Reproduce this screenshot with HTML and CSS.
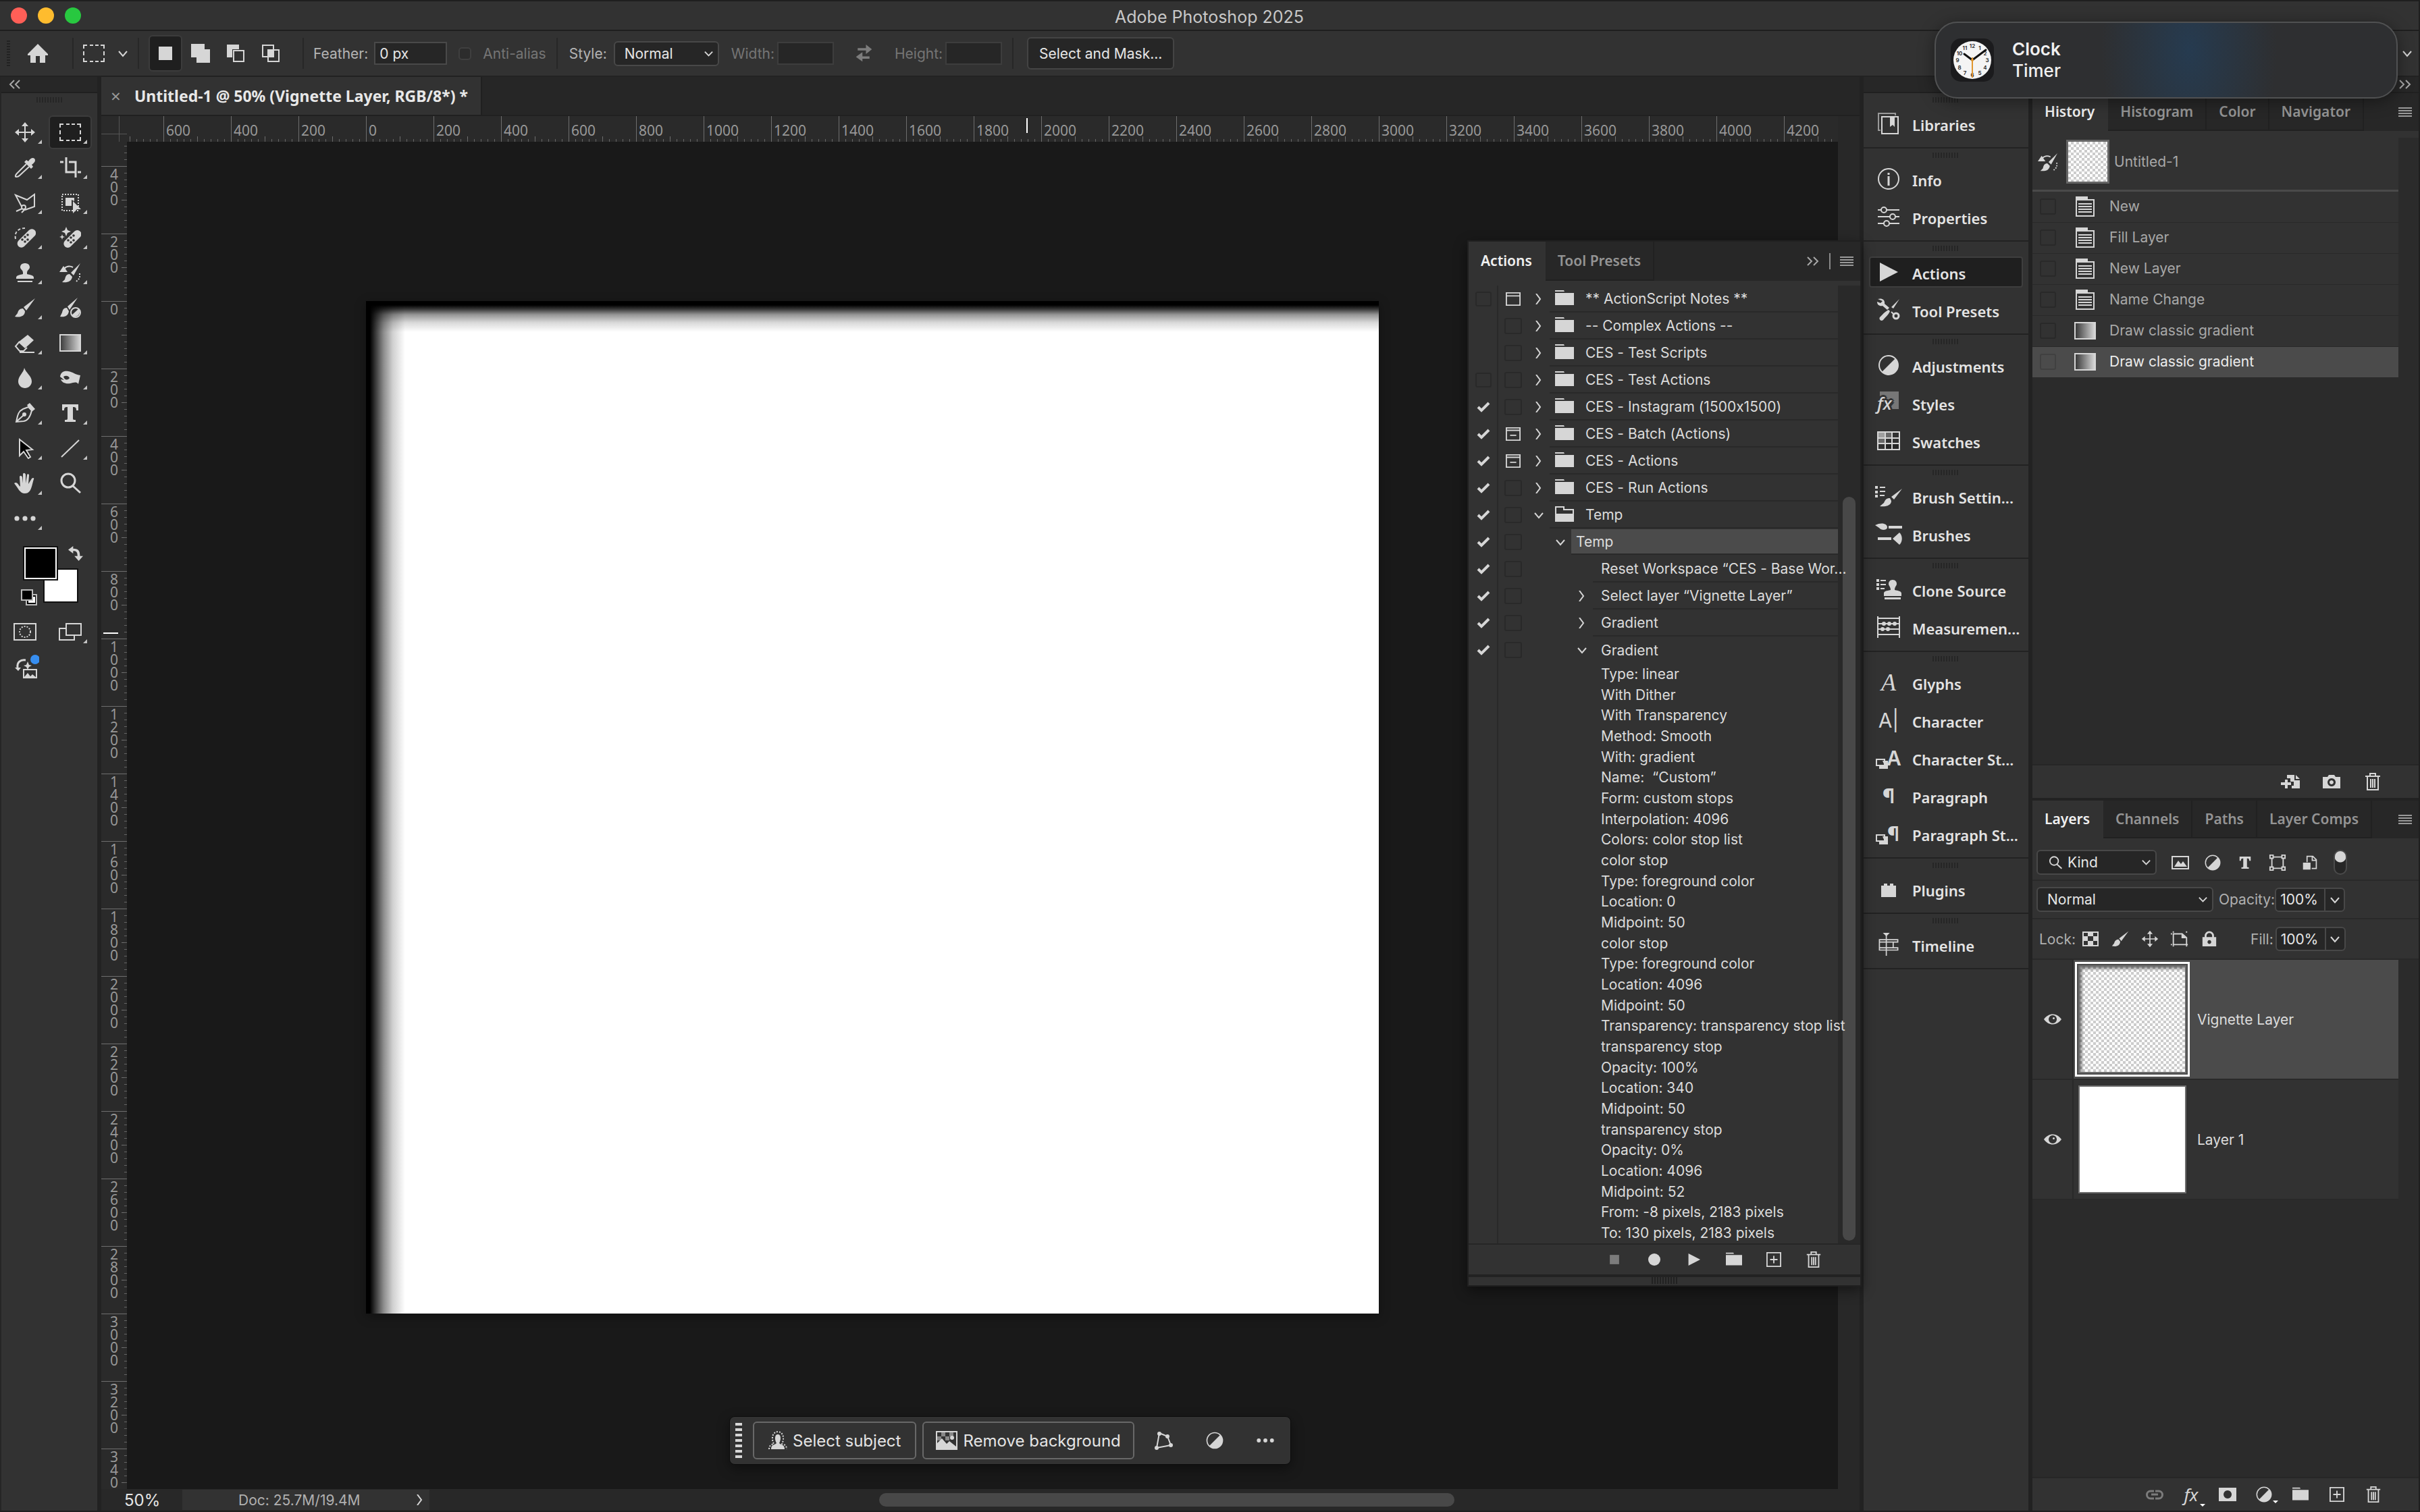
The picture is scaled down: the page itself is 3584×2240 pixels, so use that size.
FILE: index.html
```html
<!DOCTYPE html>
<html lang="en">
<head>
  <meta charset="UTF-8">
  <meta name="viewport" content="width=device-width, initial-scale=1.0">
  <title>Adobe Photoshop 2025</title>
  <link rel="stylesheet" href="styles.css">
</head>
<body>

<!-- Icon sprite -->
<svg class="sprite" aria-hidden="true">
  <defs>
    <linearGradient id="grad"><stop offset="0" stop-color="#3a3a3a"/><stop offset="1" stop-color="#d6d6d6"/></linearGradient>
    <symbol id="i-home" viewBox="0 0 32 32"><path d="M16 2 1 17v2h4v11h8v-10h6v10h8V19h4v-2z"/></symbol>
    <symbol id="i-marquee" viewBox="0 0 32 32"><path class="s" d="M1 9V4h5M10 4h5M18 4h5M26 4h5v5M31 13v6M31 23v5h-5M23 28h-5M15 28h-5M6 28H1v-5M1 19v-6"/></symbol>
    <symbol id="i-chev" viewBox="0 0 16 16"><path class="s" d="M2 5l6 7 6-7"/></symbol>
    <symbol id="i-right" viewBox="0 0 16 16"><path class="s" d="M4 0l6 8-6 8"/></symbol>
    <symbol id="i-dbl" viewBox="0 0 20 16"><path class="s" d="M2 2l6 6-6 6M11 2l6 6-6 6"/></symbol>
    <symbol id="i-dbll" viewBox="0 0 20 16"><path class="s" d="M9 2L3 8l6 6M17 2l-6 6 6 6"/></symbol>
    <symbol id="i-menu" viewBox="0 0 20 16"><path d="M0 1h20v2H0zM0 5h20v2H0zM0 9h20v2H0zM0 13h20v2H0z"/></symbol>
    <symbol id="i-new" viewBox="0 0 32 32"><path d="M6 6h20v20H6z"/></symbol>
    <symbol id="i-add" viewBox="0 0 32 32"><path d="M2 2h20v8h8v20H10v-8H2z"/></symbol>
    <symbol id="i-sub" viewBox="0 0 32 32"><path d="M3 3h18v7H11v12H3z"/><path class="s" d="M13 12h15v16H13z"/></symbol>
    <symbol id="i-int" viewBox="0 0 32 32"><path class="s" d="M4 4h16v17H4zM12 11h16v17H12z"/><path d="M12 11h8v10h-8z"/></symbol>
    <symbol id="i-swap" viewBox="0 0 32 32"><path d="M6 7h14V1l10 8-10 8v-6H6zM26 25H14v5L3 22l11-8v7h12z"/></symbol>
    <symbol id="i-move" viewBox="0 0 32 32"><path class="s" d="M16 5v22M5 16h22"/><path d="M16 1l5 6H11zM16 31l5-6H11zM1 16l6-5v10zM31 16l-6-5v10z"/></symbol>
    <symbol id="i-eyedrop" viewBox="0 0 32 32"><path class="s" d="M18 11L4 25c-2 2-3 5-1 5s3 0 5-2l14-13"/><path d="M15 8l3-3 3 2c3-5 7-6 9-4s1 6-4 9l2 3-3 3z"/></symbol>
    <symbol id="i-crop" viewBox="0 0 32 32"><path class="s3" d="M1 8h5M10 1v22h13M14 8h10v23M27 23h5"/></symbol>
    <symbol id="i-lasso" viewBox="0 0 32 32"><path class="s" d="M11 22L2 5l17 7 11-8v18l-14 5"/><circle class="s" cx="14" cy="23" r="3"/><path class="s" d="M12 25l-9 4M16 26l-5 5"/></symbol>
    <symbol id="i-object" viewBox="0 0 32 32"><path class="d" d="M4 4h24v24H4z"/><path d="M9 9h13v5l-4-2v9H9z"/><path d="M20 14l12 12h-6l-6 6z"/></symbol>
    <symbol id="i-heal" viewBox="0 0 32 32"><path class="s" stroke-dasharray="4 3" d="M2 18C0 8 6 2 16 2"/><rect x="1" y="12" width="34" height="12" rx="6" transform="rotate(-45 17 17)"/><g class="h"><circle cx="16" cy="15" r="1.8"/><circle cx="20" cy="19" r="1.8"/><circle cx="20" cy="12" r="1.8"/><circle cx="12" cy="19" r="1.8"/><circle cx="16" cy="22" r="1.8"/></g></symbol>
    <symbol id="i-remove" viewBox="0 0 32 32"><path d="M10 0l2 5 5 2-5 2-2 5-2-5-5-2 5-2zM4 11l1 3 3 1-3 1-1 3-1-3-3-1 3-1z"/><rect x="3" y="13" width="32" height="12" rx="6" transform="rotate(-45 18 18)"/><g class="h"><circle cx="17" cy="16" r="1.8"/><circle cx="21" cy="20" r="1.8"/><circle cx="21" cy="13" r="1.8"/><circle cx="13" cy="20" r="1.8"/><circle cx="17" cy="23" r="1.8"/></g></symbol>
    <symbol id="i-stamp" viewBox="0 0 32 32"><path d="M16 2c4 0 7 2 7 6 0 3-4 4-4 8v2c4 1 10 2 10 5v2H3v-2c0-3 6-4 10-5v-2c0-4-4-5-4-8 0-4 3-6 7-6zM5 28h22v2H5z"/></symbol>
    <symbol id="i-histbrush" viewBox="0 0 32 32"><path d="M31 2L17 16l4 4zM15 18c-5 0-6 4-7 8l-4 4c8 1 14-1 15-8zM0 15l6-9 6 9z"/><path class="s" d="M7 10c4-4 9-4 13-2"/><path class="d" d="M30 17v7l-6 6"/></symbol>
    <symbol id="i-brush" viewBox="0 0 32 32"><path d="M31 2L14 15l4 5zM13 17c-5 0-7 3-8 7l-4 5c8 2 15-1 15-8z"/></symbol>
    <symbol id="i-mixer" viewBox="0 0 32 32"><path d="M27 1L12 14l3 5zM11 16c-5 0-6 3-7 7l-3 6c7 1 12-1 13-8z"/><circle class="s" cx="24" cy="23" r="7"/><path d="M18 27l11-10c4 8-4 16-11 10z"/></symbol>
    <symbol id="i-eraser" viewBox="0 0 32 32"><path d="M20 4l9 8-13 12-10-9z"/><path class="s" d="M8 14l-6 7 6 7h6l5-5M8 30h22"/></symbol>
    <symbol id="i-gradient" viewBox="0 0 32 32"><path class="s g" d="M1 4h30v24H1z"/></symbol>
    <symbol id="i-blur" viewBox="0 0 32 32"><path d="M15 1c2 7 11 12 11 20 0 6-5 10-10 10S6 27 6 21C6 13 14 8 15 1z"/></symbol>
    <symbol id="i-smudge" viewBox="0 0 32 32"><path fill-rule="evenodd" d="M1 14C2 7 7 5 13 6c7 1 10 5 18 6l-3 13c-3-4-7-2-12-1-7 1-12-1-14-6l5 1zM6 14c2 6 7 5 9 2-2-4-6-4-9-2z"/></symbol>
    <symbol id="i-pen" viewBox="0 0 32 32"><path class="s" d="M3 29c2-8 2-15 10-19l8-3 5 5c-2 9-5 15-12 16zM4 28l10-9"/><circle cx="15" cy="18" r="3"/><path d="M19 4l4-3 8 9-5 4z"/></symbol>
    <symbol id="i-type" viewBox="0 0 32 32"><path d="M4 3h24v9h-3c0-4-1-5-5-5v17c0 2 1 2 4 2v3H8v-3c3 0 4 0 4-2V7C8 7 7 8 7 12H4z"/></symbol>
    <symbol id="i-select" viewBox="0 0 32 32"><path class="k" d="M8 3v24l6-6 7 10 3-2-6-10 9-1z"/></symbol>
    <symbol id="i-line" viewBox="0 0 32 32"><path class="s" d="M3 29L29 4"/></symbol>
    <symbol id="i-hand" viewBox="0 0 32 32"><path d="M0 16c2-2 5-1 7 3l2 2L8 7c0-3 3-3 4 0l1 9V3c0-3 3-3 4 0v13l2-12c0-3 4-2 3 1l-1 12 5-8c2-2 4-1 3 1-3 8-3 21-13 21C8 31 6 23 0 16z"/></symbol>
    <symbol id="i-zoom" viewBox="0 0 32 32"><circle class="s3" cx="13" cy="12" r="10"/><path class="s3" d="M20 20l11 10"/></symbol>
    <symbol id="i-dots" viewBox="0 0 32 32"><circle cx="4" cy="16" r="3.6"/><circle cx="16" cy="16" r="3.6"/><circle cx="28" cy="16" r="3.6"/></symbol>
    <symbol id="i-swapc" viewBox="0 0 24 24"><path d="M0 6l8-6v4c9 0 11 4 11 12h5l-7 8-7-8h5c0-6-2-8-7-8v4z"/></symbol>
    <symbol id="i-mini" viewBox="0 0 24 24"><path fill="#bbb" d="M7 7h17v17H7z"/><path fill="#000" d="M9 9h13v13H9z"/><path fill="#fff" d="M11 11h10v9H11z"/><path fill="#bbb" d="M0 0h18v17H0z"/><path fill="#000" d="M2 2h14v13H2z"/></symbol>
    <symbol id="i-mask" viewBox="0 0 34 26"><path class="s" d="M1 1h32v24H1z"/><circle class="d" cx="17" cy="13" r="8"/></symbol>
    <symbol id="i-screen" viewBox="0 0 34 26"><path class="s" d="M11 1h22v17H11zM10 8H1v17h22v-6"/></symbol>
    <symbol id="i-gen" viewBox="0 0 36 36"><path class="s3" d="M16 8C8 7 3 11 4 19"/><path d="M0 19h9l-4 5zM19 10l2 5 4 1-4 2-2 4-2-4-4-2 4-1z"/><path class="s" d="M13 22h19v12H13z"/><path d="M13 34l6-7 4 5 3-3 6 5z"/><circle cx="30" cy="7" r="7" fill="#378ef0"/></symbol>
    <symbol id="i-lib" viewBox="0 0 34 34"><path fill="none" stroke="#999" stroke-width="2" d="M5 27H2V2h25v3"/><path class="s" d="M7 7h24v25H7z"/><path d="M19 7h7v15l-3-3-4 3z"/></symbol>
    <symbol id="i-info" viewBox="0 0 34 34"><circle class="s" cx="17" cy="17" r="15"/><path d="M15.500 13h3v14h-3zM15.500 8h3v3h-3z"/></symbol>
    <symbol id="i-props" viewBox="0 0 34 34"><path class="s" d="M1 7h5M14 7h19M1 17h18M27 17h6M1 27h9M18 27h15"/><circle class="s" cx="10" cy="7" r="4"/><circle class="s" cx="23" cy="17" r="4"/><circle class="s" cx="14" cy="27" r="4"/></symbol>
    <symbol id="i-play" viewBox="0 0 34 34"><path d="M4 3l27 14L4 31z"/></symbol>
    <symbol id="i-presets" viewBox="0 0 34 34"><path d="M33 1L21 13l3 2zM17 17c-5 2-8 6-13 11-2 3 2 7 5 4 4-5 8-8 10-13zM1 1c6-2 11 1 10 7l7 6-3 3-7-6c-4 1-8-1-8-6l5 2 3-3z"/><path class="s" d="M21 20l4 4"/><circle class="s3" cx="28" cy="26" r="4"/></symbol>
    <symbol id="i-adj" viewBox="0 0 34 34"><circle class="s" cx="17" cy="17" r="14"/><path d="M7 27L27 7a14 14 0 0 1-20 20z"/></symbol>
    <symbol id="i-swatch" viewBox="0 0 34 34"><path fill="#a0a0a0" d="M2 5h10v8H2z"/><path fill="#6a6a6a" d="M2 13h10v8H2zM12 5h10v8H12z"/><path fill="#262626" d="M12 21h20v8H12z"/><path class="s" d="M1 4h32v26H1zM1 13h32M1 21h32M12 4v26M22 4v26"/></symbol>
    <symbol id="i-bset" viewBox="0 0 40 34"><path d="M0 2h4v4H0zM0 9h4v4H0zM0 15h4v4H0zM7 3h8v2H7zM7 9h8v2H7zM7 15h7v2H7zM40 6L24 18l4 4zM22 20c-6 0-7 3-9 7l-6 5c9 1 17-1 17-8z"/></symbol>
    <symbol id="i-brushes" viewBox="0 0 40 34"><path d="M0 4c10-5 18-2 18 3s-9 5-12 1zM20 5h20v4H20zM4 22h20v4H4zM26 24l10-9c5 4 5 14 0 18z"/></symbol>
    <symbol id="i-clone" viewBox="0 0 40 34"><path d="M2 2h4v4H2zM2 8h4v4H2zM2 14h4v4H2zM8 3h8v2H8zM8 9h8v2H8zM8 15h6v2H8zM26 3c4 0 6 3 6 6s-3 4-3 9c5 1 10 2 10 5v4H13v-4c0-3 5-4 10-5 0-5-3-6-3-9s2-6 6-6zM14 29h24v3H14z"/></symbol>
    <symbol id="i-meas" viewBox="0 0 34 34"><path class="s" d="M1 1v32M33 1v32M1 4h32M1 12h32M1 20h32M1 28h32"/><circle cx="10" cy="12" r="3"/><circle cx="18" cy="12" r="3"/><circle cx="26" cy="12" r="3"/><circle cx="8" cy="20" r="3"/><circle cx="16" cy="20" r="3"/></symbol>
    <symbol id="i-plugin" viewBox="0 0 34 34"><path d="M6 12h4V9h5v3h4V9h5v3h4v17H6z"/></symbol>
    <symbol id="i-time" viewBox="0 0 34 40"><path class="s" d="M1 11v20M33 11v6M33 25v6M1 12h32M1 30h32M25 16v10M13 4v36M1 16h32M1 26h32"/><path d="M7 0h12l-6 6z"/></symbol>
    <symbol id="i-doc" viewBox="0 0 28 30"><path d="M0 0h18v4h10v26H0zM2 6v22h24V6z" fill-rule="evenodd"/><path d="M4 10h20v2H4zM4 14h20v2H4zM4 18h20v2H4zM4 22h20v2H4z"/></symbol>
    <symbol id="i-newdoc" viewBox="0 0 28 24"><path d="M9 2h11v8h8v12H16v-4h3v-6h-5V7H9zM22 2l6 6h-6zM6 9h4v4h5v4h-5v5H6v-5H0v-4h6z"/></symbol>
    <symbol id="i-camera" viewBox="0 0 28 24"><path fill-rule="evenodd" d="M1 5h7l2-3h8l2 3h7v17H1zM14 7a6 6 0 1 0 .1 0zm0 3a3 3 0 1 1-.1 0z"/></symbol>
    <symbol id="i-trash" viewBox="0 0 24 28"><path class="s" d="M1 6h22M8 5V2h8v3M4 6v20h16V6M9 10v13M12 10v13M15 10v13"/></symbol>
    <symbol id="i-plus" viewBox="0 0 24 24"><path class="s" d="M1 1h22v22H1zM12 6v12M6 12h12"/></symbol>
    <symbol id="i-folder" viewBox="0 0 28 24"><path d="M0 0h13l1 2H0zM0 4h28v18H0z"/></symbol>
    <symbol id="i-open" viewBox="0 0 28 24"><path class="s" d="M1 1h12v4h14v17H1z"/><path d="M0 11h28v12H0z"/></symbol>
    <symbol id="i-dialog" viewBox="0 0 24 24"><path class="s" d="M1 2h22v20H1zM1 7h22"/></symbol>
    <symbol id="i-dialogm" viewBox="0 0 24 24"><path class="s" d="M1 2h22v20H1zM1 6h22M7 14h10"/></symbol>
    <symbol id="i-image" viewBox="0 0 28 24"><path class="s" d="M2 3h24v18H2z"/><path d="M5 18l6-9 4 5 3-4 6 8z"/></symbol>
    <symbol id="i-shape" viewBox="0 0 28 28"><path class="s" d="M5 5h18v18H5z"/><path class="n" d="M2 2h5v5H2zM21 2h5v5h-5zM2 21h5v5H2zM21 21h5v5h-5z"/></symbol>
    <symbol id="i-smart" viewBox="0 0 28 28"><path class="s" d="M9 13V3h10l6 6v15h-8M18 3v7h7"/><path d="M2 14h13v12H2z"/></symbol>
    <symbol id="i-check" viewBox="0 0 24 24"><path class="s" d="M1 2h22v20H1z"/><path d="M8 2h8v6H8zM1 8h7v7H1zM16 8h7v7h-7zM8 15h8v7H8z"/></symbol>
    <symbol id="i-artb" viewBox="0 0 30 24"><path class="s" d="M5 4h14l7 6v11H5z"/><path d="M18 4l8 7h-8z"/><path class="d" d="M1 4h4M1 21h4M5 0v3M26 0v3M26 21h4M5 22v2M26 22v2"/></symbol>
    <symbol id="i-lock" viewBox="0 0 24 26"><path fill-rule="evenodd" d="M1 10h22v15H1zM12 15a3 3 0 1 0 .1 0z"/><path class="s3" d="M6 11V8a6 6 0 0 1 12 0v3"/></symbol>
    <symbol id="i-eye" viewBox="0 0 26 18"><path fill-rule="evenodd" d="M0 9C7-1 19-1 26 9 19 19 7 19 0 9zm13-6a6 6 0 1 0 .1 0z"/><circle cx="14.500" cy="7.500" r="1.500"/></symbol>
    <symbol id="i-link" viewBox="0 0 28 20"><path class="s3" d="M13 5H8a5 5 0 0 0 0 11h5M15 5h5a5 5 0 0 1 0 11h-5M9 10h10"/></symbol>
    <symbol id="i-amask" viewBox="0 0 26 22"><path fill-rule="evenodd" d="M0 1h26v20H0zM13 5a6 6 0 1 0 .1 0z"/></symbol>
    <symbol id="i-cst" viewBox="0 0 34 34"><path class="s" d="M1 15h12v9H1z"/><path d="M10 17h8v12H5v-5h8z"/></symbol>
    <symbol id="i-subject" viewBox="0 0 28 28"><path class="d" d="M1 27c0-6 4-7 7-8-3-5-4-17 6-18 10 1 9 13 6 18 3 1 7 2 7 8"/><path d="M14 5c5 0 5 8 2 13 3 3 8 2 8 9H4c0-7 5-6 8-9C9 13 9 5 14 5z"/></symbol>
    <symbol id="i-bg" viewBox="0 0 32 28"><path class="s" d="M1 1h30v26H1z"/><path fill="#888" d="M8 2h6v6H8zM20 2h6v6h-6zM2 8h6v6H2zM14 8h6v6h-6z"/><path d="M2 26V18l7-7 7 8 4-4 10 8v4z"/><circle cx="24" cy="10" r="3"/></symbol>
    <symbol id="i-poly" viewBox="0 0 28 28"><path class="s" d="M8 3l12 5 5 13L4 25z"/><circle cx="8" cy="4" r="3"/><circle cx="20" cy="8" r="3"/><circle cx="25" cy="21" r="3"/><circle cx="4" cy="25" r="3"/></symbol>
  </defs>
</svg>

<header class="titlebar">
  <span class="light red"></span><span class="light yellow"></span><span class="light green"></span>
  <h1>Adobe Photoshop 2025</h1>
</header>

<div class="options">
  <span class="vgrip"></span>
  <button class="home" aria-label="Home"><svg class="i32"><use href="#i-home"/></svg></button>
  <span class="sep"></span>
  <button class="preset" aria-label="Tool preset"><svg class="i32"><use href="#i-marquee"/></svg><svg class="i16"><use href="#i-chev"/></svg></button>
  <span class="sep"></span>
  <div class="modes">
    <button class="mode active" aria-label="New selection"><svg class="i32"><use href="#i-new"/></svg></button>
    <button class="mode" aria-label="Add to selection"><svg class="i32"><use href="#i-add"/></svg></button>
    <button class="mode" aria-label="Subtract from selection"><svg class="i32"><use href="#i-sub"/></svg></button>
    <button class="mode" aria-label="Intersect with selection"><svg class="i32"><use href="#i-int"/></svg></button>
  </div>
  <span class="sep"></span>
  <div class="field feather"><label for="feather">Feather:</label><input type="text" id="feather" value="0 px"></div>
  <div class="field anti off"><input type="checkbox" id="anti" disabled><label for="anti">Anti-alias</label></div>
  <span class="sep"></span>
  <div class="field style"><label for="style">Style:</label><select id="style"><option>Normal</option></select></div>
  <div class="field off"><label for="w">Width:</label><input type="text" id="w" class="small" disabled></div>
  <button class="swap off" aria-label="Swap width and height"><svg class="i28"><use href="#i-swap"/></svg></button>
  <div class="field off"><label for="h">Height:</label><input type="text" id="h" class="small" disabled></div>
  <span class="sep"></span>
  <button class="mask-btn">Select and Mask...</button>
  <button class="more" aria-label="Workspace"><svg class="i16"><use href="#i-chev"/></svg></button>
</div>

<main class="workspace">
  <aside class="tools">
    <div class="head"><svg class="dbl"><use href="#i-dbll"/></svg></div>
    <div class="grip"></div>
    <div class="tool-grid">
      <button class="tool" aria-label="Move"><svg class="i32"><use href="#i-move"/></svg></button>
      <button class="tool active" aria-label="Rectangular Marquee"><svg class="i32"><use href="#i-marquee"/></svg></button>
      <button class="tool" aria-label="Eyedropper"><svg class="i32"><use href="#i-eyedrop"/></svg></button>
      <button class="tool" aria-label="Crop"><svg class="i32"><use href="#i-crop"/></svg></button>
      <button class="tool" aria-label="Polygonal Lasso"><svg class="i32"><use href="#i-lasso"/></svg></button>
      <button class="tool" aria-label="Object Selection"><svg class="i32"><use href="#i-object"/></svg></button>
      <button class="tool" aria-label="Spot Healing Brush"><svg class="i32"><use href="#i-heal"/></svg></button>
      <button class="tool" aria-label="Remove"><svg class="i32"><use href="#i-remove"/></svg></button>
      <button class="tool" aria-label="Clone Stamp"><svg class="i32"><use href="#i-stamp"/></svg></button>
      <button class="tool" aria-label="History Brush"><svg class="i32"><use href="#i-histbrush"/></svg></button>
      <button class="tool" aria-label="Brush"><svg class="i32"><use href="#i-brush"/></svg></button>
      <button class="tool single" aria-label="Mixer Brush"><svg class="i32"><use href="#i-mixer"/></svg></button>
      <button class="tool" aria-label="Eraser"><svg class="i32"><use href="#i-eraser"/></svg></button>
      <button class="tool" aria-label="Gradient"><svg class="i32"><use href="#i-gradient"/></svg></button>
      <button class="tool" aria-label="Blur"><svg class="i32"><use href="#i-blur"/></svg></button>
      <button class="tool" aria-label="Burn"><svg class="i32"><use href="#i-smudge"/></svg></button>
      <button class="tool" aria-label="Pen"><svg class="i32"><use href="#i-pen"/></svg></button>
      <button class="tool" aria-label="Type"><svg class="i32"><use href="#i-type"/></svg></button>
      <button class="tool" aria-label="Path Selection"><svg class="i32"><use href="#i-select"/></svg></button>
      <button class="tool" aria-label="Line"><svg class="i32"><use href="#i-line"/></svg></button>
      <button class="tool" aria-label="Hand"><svg class="i32"><use href="#i-hand"/></svg></button>
      <button class="tool single" aria-label="Zoom"><svg class="i32"><use href="#i-zoom"/></svg></button>
      <button class="tool" aria-label="Edit Toolbar"><svg class="i32"><use href="#i-dots"/></svg></button>
    </div>
    <div class="colors">
      <button class="swatch back" aria-label="Background color"></button>
      <button class="swatch fore" aria-label="Foreground color"></button>
      <svg class="swap-colors"><use href="#i-swapc"/></svg>
      <svg class="mini"><use href="#i-mini"/></svg>
    </div>
    <div class="tool-grid">
      <button class="tool single" aria-label="Quick Mask"><svg class="wide"><use href="#i-mask"/></svg></button>
      <button class="tool" aria-label="Screen Mode"><svg class="wide"><use href="#i-screen"/></svg></button>
      <button class="tool single gen" aria-label="Generate"><svg class="i36"><use href="#i-gen"/></svg></button>
    </div>
  </aside>

  <section class="document">
    <div class="doc-tabs">
      <div class="doc-tab"><button class="close" aria-label="Close">×</button>Untitled-1 @ 50% (Vignette Layer, RGB/8*) *</div>
    </div>
    <div class="doc-body">
      <div class="corner"></div>
      <div class="ruler-h" id="rulerH"><i class="pos"></i></div>
      <div class="filler"></div>
      <div class="ruler-v" id="rulerV"><i class="pos"></i></div>
      <div class="canvas">
        <div class="artboard"></div>
        <div class="taskbar">
          <span class="dots"></span>
          <button class="task"><svg class="i28"><use href="#i-subject"/></svg>Select subject</button>
          <button class="task"><svg class="i32"><use href="#i-bg"/></svg>Remove background</button>
          <button class="plain" aria-label="Transform"><svg class="i28"><use href="#i-poly"/></svg></button>
          <button class="plain" aria-label="Adjustment"><svg class="i28"><use href="#i-adj"/></svg></button>
          <button class="plain" aria-label="More"><svg class="i26"><use href="#i-dots"/></svg></button>
        </div>
      </div>
      <div class="vscroll"></div>
    </div>
    <div class="status">
      <span class="zoom">50%</span>
      <div class="doc-size"><span>Doc: 25.7M/19.4M</span><svg class="i16"><use href="#i-right"/></svg></div>
      <div class="hscroll"><div class="thumb"></div></div>
    </div>
  </section>

  <aside class="dock">
    <div class="head"></div>
    <div class="group"><button><svg class="i34"><use href="#i-lib"/></svg>Libraries</button></div>
    <div class="group">
      <button><svg class="i34"><use href="#i-info"/></svg>Info</button>
      <button><svg class="i34"><use href="#i-props"/></svg>Properties</button>
    </div>
    <div class="group">
      <button class="active"><svg class="i34"><use href="#i-play"/></svg>Actions</button>
      <button><svg class="i34"><use href="#i-presets"/></svg>Tool Presets</button>
    </div>
    <div class="group">
      <button><svg class="i34"><use href="#i-adj"/></svg>Adjustments</button>
      <button><span class="glyph fx">fx</span>Styles</button>
      <button><svg class="i34"><use href="#i-swatch"/></svg>Swatches</button>
    </div>
    <div class="group">
      <button><svg class="i40"><use href="#i-bset"/></svg>Brush Settin...</button>
      <button><svg class="i40"><use href="#i-brushes"/></svg>Brushes</button>
    </div>
    <div class="group">
      <button><svg class="i40"><use href="#i-clone"/></svg>Clone Source</button>
      <button><svg class="i34"><use href="#i-meas"/></svg>Measuremen...</button>
    </div>
    <div class="group">
      <button><span class="glyph script">A</span>Glyphs</button>
      <button><span class="glyph">A|</span>Character</button>
      <button><span class="glyph mixed"><svg><use href="#i-cst"/></svg>A</span>Character St...</button>
      <button><span class="glyph para">¶</span>Paragraph</button>
      <button><span class="glyph mixed"><svg><use href="#i-cst"/></svg>¶</span>Paragraph St...</button>
    </div>
    <div class="group"><button><svg class="i34"><use href="#i-plugin"/></svg>Plugins</button></div>
    <div class="group"><button><svg class="i40"><use href="#i-time"/></svg>Timeline</button></div>
  </aside>

  <aside class="panels">
    <div class="head end"><svg class="dbl"><use href="#i-dbl"/></svg></div>
    <section class="panel history">
      <div class="tabs">
        <button class="tab active">History</button><button class="tab">Histogram</button><button class="tab">Color</button><button class="tab">Navigator</button>
        <svg class="menu"><use href="#i-menu"/></svg>
      </div>
      <div class="scroll-area">
        <div class="list">
          <div class="snapshot"><svg class="i30"><use href="#i-histbrush"/></svg><span class="thumb checker"></span>Untitled-1</div>
          <ul class="states">
            <li><input type="checkbox" aria-label="New"><svg class="doc"><use href="#i-doc"/></svg>New</li>
            <li><input type="checkbox" aria-label="Fill Layer"><svg class="doc"><use href="#i-doc"/></svg>Fill Layer</li>
            <li><input type="checkbox" aria-label="New Layer"><svg class="doc"><use href="#i-doc"/></svg>New Layer</li>
            <li><input type="checkbox" aria-label="Name Change"><svg class="doc"><use href="#i-doc"/></svg>Name Change</li>
            <li><input type="checkbox" aria-label="Draw classic gradient"><span class="gradient"></span>Draw classic gradient</li>
            <li class="active"><input type="checkbox" aria-label="Draw classic gradient"><span class="gradient"></span>Draw classic gradient</li>
          </ul>
        </div>
      </div>
      <div class="foot hist-foot">
        <button aria-label="New document from state"><svg class="i28"><use href="#i-newdoc"/></svg></button>
        <button aria-label="New snapshot"><svg class="i28"><use href="#i-camera"/></svg></button>
        <button aria-label="Delete"><svg class="i28"><use href="#i-trash"/></svg></button>
      </div>
    </section>

    <section class="panel layers">
      <div class="tabs">
        <button class="tab active">Layers</button><button class="tab">Channels</button><button class="tab">Paths</button><button class="tab">Layer Comps</button>
        <svg class="menu"><use href="#i-menu"/></svg>
      </div>
      <div class="filter-row">
        <div class="kind"><svg class="i20"><use href="#i-zoom"/></svg><select aria-label="Filter"><option>Kind</option></select></div>
        <button aria-label="Pixel layers"><svg class="i28"><use href="#i-image"/></svg></button>
        <button aria-label="Adjustment layers"><svg class="i26"><use href="#i-adj"/></svg></button>
        <button aria-label="Type layers"><svg class="i22"><use href="#i-type"/></svg></button>
        <button aria-label="Shape layers"><svg class="i26"><use href="#i-shape"/></svg></button>
        <button aria-label="Smart objects"><svg class="i24"><use href="#i-smart"/></svg></button>
        <input type="checkbox" class="toggle" aria-label="Filtering on or off">
      </div>
      <div class="blend-row">
        <select class="blend" aria-label="Blend mode"><option>Normal</option></select>
        <label for="opacity">Opacity:</label>
        <div class="combo"><input type="text" id="opacity" value="100%"><button aria-label="Opacity slider"><svg class="i16"><use href="#i-chev"/></svg></button></div>
      </div>
      <div class="lock-row">
        <span>Lock:</span>
        <button aria-label="Lock transparency"><svg class="i24"><use href="#i-check"/></svg></button>
        <button aria-label="Lock pixels"><svg class="i26"><use href="#i-brush"/></svg></button>
        <button aria-label="Lock position"><svg class="i26"><use href="#i-move"/></svg></button>
        <button aria-label="Lock artboard"><svg class="i28"><use href="#i-artb"/></svg></button>
        <button aria-label="Lock all"><svg class="i24"><use href="#i-lock"/></svg></button>
        <label for="fill">Fill:</label>
        <div class="combo"><input type="text" id="fill" value="100%"><button aria-label="Fill slider"><svg class="i16"><use href="#i-chev"/></svg></button></div>
      </div>
      <div class="scroll-area">
        <div class="list">
          <div class="layer active"><button class="eye" aria-label="Visibility"><svg class="i26"><use href="#i-eye"/></svg></button><div class="name"><span class="frame"><span class="thumb checker shade"></span></span>Vignette Layer</div></div>
          <div class="layer"><button class="eye" aria-label="Visibility"><svg class="i26"><use href="#i-eye"/></svg></button><div class="name"><span class="frame"><span class="thumb"></span></span>Layer 1</div></div>
        </div>
      </div>
      <div class="foot">
        <button class="off" aria-label="Link layers"><svg class="i28"><use href="#i-link"/></svg></button>
        <button class="fx drop" aria-label="Layer style">fx</button>
        <button aria-label="Add mask"><svg class="i26"><use href="#i-amask"/></svg></button>
        <button class="drop" aria-label="New adjustment layer"><svg class="i26"><use href="#i-adj"/></svg></button>
        <button aria-label="New group"><svg class="i24"><use href="#i-folder"/></svg></button>
        <button aria-label="New layer"><svg class="i22"><use href="#i-plus"/></svg></button>
        <button aria-label="Delete layer"><svg class="i26"><use href="#i-trash"/></svg></button>
      </div>
    </section>
  </aside>

  <!-- Floating actions panel -->
  <section class="actions">
    <div class="tabs">
      <button class="tab active">Actions</button><button class="tab">Tool Presets</button>
      <svg class="dbl"><use href="#i-dbl"/></svg><span class="bar"></span><svg class="menu"><use href="#i-menu"/></svg>
    </div>
    <div class="act-body">
      <div class="act-list">
        <div id="rows"></div>
        <ul class="props" id="props"></ul>
      </div>
      <div class="act-scroll"><div class="thumb"></div></div>
    </div>
    <div class="foot act-foot">
      <button class="off" aria-label="Stop"><svg class="i22"><use href="#i-new"/></svg></button>
      <button aria-label="Record"><span class="rec"></span></button>
      <button aria-label="Play"><svg class="i22"><use href="#i-play"/></svg></button>
      <button aria-label="New set"><svg class="i24"><use href="#i-folder"/></svg></button>
      <button aria-label="New action"><svg class="i22"><use href="#i-plus"/></svg></button>
      <button aria-label="Delete"><svg class="i26"><use href="#i-trash"/></svg></button>
    </div>
    <div class="resize"></div>
  </section>
</main>

<div class="notice" role="status">
  <svg class="clock" viewBox="0 0 64 64">
    <rect width="64" height="64" rx="15" fill="#1b1b1d"/>
    <circle cx="32" cy="32" r="28" fill="#f4f4f4"/>
    <g class="nums">
      <text x="32" y="14">12</text><text x="43" y="17">1</text><text x="51" y="25">2</text><text x="54" y="35">3</text><text x="51" y="46">4</text><text x="43" y="54">5</text><text x="32" y="57">6</text><text x="21" y="54">7</text><text x="13" y="46">8</text><text x="10" y="35">9</text><text x="13" y="25">10</text><text x="21" y="17">11</text>
    </g>
    <path d="M32 32L20 23M32 32L52 17" stroke="#111" stroke-width="3" stroke-linecap="round"/>
    <path d="M32 28v30" stroke="#e0962f" stroke-width="2"/><circle cx="32" cy="32" r="2" fill="#e0962f"/>
  </svg>
  <div><strong>Clock</strong><p>Timer</p></div>
</div>

<script>
  const use = (id, cls) => `<svg class="${cls}"><use href="#i-${id}"/></svg>`;

  // Rulers: one cell per 200 units, the first one starts outside and has no label
  const rulerH = document.getElementById('rulerH');
  for (let n = -800; n <= 4200; n += 200) {
    rulerH.insertAdjacentHTML('beforeend', `<span class="cell">${n === -800 ? '' : Math.abs(n)}</span>`);
  }
  const rulerV = document.getElementById('rulerV');
  for (let n = -600; n <= 3400; n += 200) {
    const digits = n === -600 ? '' : String(Math.abs(n)).split('').join('<br>');
    rulerV.insertAdjacentHTML('beforeend', `<span class="cell">${digits}</span>`);
  }

  // toggle: on / empty / none, dialog: icon or box
  const rows = [
    { toggle: 'empty', dialog: 'dialog', type: 'set', name: '** ActionScript Notes **' },
    { toggle: 'none', type: 'set', name: '-- Complex Actions --' },
    { toggle: 'none', type: 'set', name: 'CES - Test Scripts' },
    { toggle: 'empty', type: 'set', name: 'CES - Test Actions' },
    { toggle: 'on', type: 'set', name: 'CES - Instagram (1500x1500)' },
    { toggle: 'on', dialog: 'dialogm', type: 'set', name: 'CES - Batch (Actions)' },
    { toggle: 'on', dialog: 'dialogm', type: 'set', name: 'CES - Actions' },
    { toggle: 'on', type: 'set', name: 'CES - Run Actions' },
    { toggle: 'on', type: 'set', open: true, name: 'Temp' },
    { toggle: 'on', type: 'action', open: true, name: 'Temp' },
    { toggle: 'on', type: 'step', leaf: true, name: 'Reset Workspace “CES - Base Wor...' },
    { toggle: 'on', type: 'step', name: 'Select layer “Vignette Layer”' },
    { toggle: 'on', type: 'step', name: 'Gradient' },
    { toggle: 'on', type: 'step', open: true, name: 'Gradient' }
  ];
  document.getElementById('rows').innerHTML = rows.map(r => `
    <div class="row ${r.type}">
      <span class="tg">${r.toggle === 'none' ? '' : `<input type="checkbox" aria-label="Toggle ${r.name}" ${r.toggle === 'on' ? 'checked' : ''}>`}</span>
      <span class="dg">${r.dialog ? use(r.dialog, 'i22') : '<i class="box"></i>'}</span>
      <span class="chev">${r.leaf ? '' : use(r.open ? 'chev' : 'right', 'i16')}</span>
      <span class="label">${r.type === 'set' ? use(r.open ? 'open' : 'folder', 'i28') : ''}<span>${r.name}</span></span>
    </div>`).join('');

  const props = ['Type: linear', 'With Dither', 'With Transparency', 'Method: Smooth', 'With: gradient',
    'Name:  “Custom”', 'Form: custom stops', 'Interpolation: 4096', 'Colors: color stop list', 'color stop',
    'Type: foreground color', 'Location: 0', 'Midpoint: 50', 'color stop', 'Type: foreground color',
    'Location: 4096', 'Midpoint: 50', 'Transparency: transparency stop list', 'transparency stop',
    'Opacity: 100%', 'Location: 340', 'Midpoint: 50', 'transparency stop', 'Opacity: 0%',
    'Location: 4096', 'Midpoint: 52', 'From: -8 pixels, 2183 pixels', 'To: 130 pixels, 2183 pixels'];
  document.getElementById('props').innerHTML = props.map(p => `<li>${p}</li>`).join('');
</script>
</body>
</html>
```
FILE: styles.css
```css
* {
  margin: 0;
  padding: 0;
  box-sizing: border-box;
}

body {
  height: 100vh;
  display: flex;
  flex-direction: column;
  overflow: hidden;
  background: #323232;
  color: #dcdcdc;
  font-family: Inter, "Liberation Sans", sans-serif;
  font-size: 21px;
  font-feature-settings: "calt" 0;
  position: relative;
  border-right: 2px solid #1f1f1f;
  border-bottom: 2px solid #1f1f1f;
}

button, input, select {
  font: inherit;
  color: inherit;
  background: none;
  border: none;
}

button {
  display: flex;
  align-items: center;
  justify-content: center;
}

ul { list-style: none; }

/* Icons */
.sprite { position: absolute; width: 0; height: 0; }
svg { fill: currentColor; flex: none; color: #d6d6d6; }
.s, .s3, .d { fill: none; stroke: currentColor; stroke-width: 2; }
.s3 { stroke-width: 3; }
.d { stroke-dasharray: 2 2; }
.h { fill: #323232; }
.k { fill: #000; stroke: #d6d6d6; stroke-width: 2; }
.n { fill: #323232; stroke: currentColor; stroke-width: 2; }
.g { fill: url(#grad); }
.i16 { width: 16px; height: 16px; }
.i20 { width: 20px; height: 20px; }
.i22 { width: 22px; height: 22px; }
.i24 { width: 24px; height: 24px; }
.i26 { width: 26px; height: 26px; }
.i28 { width: 28px; height: 28px; }
.i30 { width: 30px; height: 30px; }
.i32 { width: 32px; height: 32px; }
.i34 { width: 34px; height: 34px; }
.i36 { width: 36px; height: 36px; }
.i40 { width: 40px; height: 34px; }
.wide { width: 34px; height: 26px; }
.dbl { width: 20px; height: 16px; color: #a8a8a8; }
.menu { width: 20px; height: 16px; color: #9a9a9a; }
.off, .off svg { color: #7c7c7c; }

/* Title bar */
.titlebar {
  height: 46px;
  flex: none;
  display: flex;
  align-items: center;
  gap: 16px;
  padding-left: 16px;
  border-top: 2px solid #1f1f1f;
  border-bottom: 2px solid #1f1f1f;
}
.light { width: 24px; height: 24px; border-radius: 50%; }
.red { background: #ff5f57; }
.yellow { background: #febc2e; }
.green { background: #28c840; }
.titlebar h1 {
  flex: 1;
  margin-right: 136px;
  padding-top: 3px;
  text-align: center;
  font-size: 25px;
  font-weight: 400;
  color: #c8c8c8;
}

/* Options bar */
.options {
  height: 68px;
  flex: none;
  display: flex;
  align-items: center;
  border-bottom: 2px solid #222;
  padding-left: 10px;
}
.vgrip {
  width: 5px;
  height: 38px;
  background: repeating-linear-gradient(#222 0 2px, transparent 2px 4px);
}
.home { margin: 0 35px 0 25px; }
.sep { width: 2px; height: 46px; background: #272727; }
.preset { margin: 0 14px 0 14px; gap: 19px; }
.modes { display: flex; margin: 0 22px 0 14px; gap: 2px; }
.mode { width: 50px; height: 54px; border: 2px solid transparent; border-radius: 6px; }
.mode.active { background: #1f1f1f; border-color: #3c3c3c; }
.field { display: flex; align-items: center; gap: 4px; margin-right: 18px; color: #b4b4b4; }
.field input[type="text"] {
  width: 108px;
  height: 34px;
  padding-left: 6px;
  color: #e6e6e6;
  background: #262626;
  border: 2px solid #494949;
}
.field input.small { width: 84px; border-color: #3d3d3d; }
.feather { margin-left: 14px; margin-right: 17px; gap: 9px; }
.anti { gap: 17px; }
.anti input { appearance: none; width: 19px; height: 19px; border: 2px solid #3f3f3f; border-radius: 5px; background: #2c2c2c; }
.field.off { color: #757575; }
.style { margin-left: 17px; gap: 10px; }
select {
  appearance: none;
  height: 37px;
  padding: 0 14px;
  color: #e6e6e6;
  border: 2px solid #484848;
  border-radius: 6px;
  background: #262626 url("data:image/svg+xml,%3Csvg xmlns='http://www.w3.org/2000/svg' viewBox='0 0 16 16'%3E%3Cpath d='M2 5l6 6 6-6' fill='none' stroke='%23d6d6d6' stroke-width='2'/%3E%3C/svg%3E") no-repeat right 6px center / 15px;
}
.style select { width: 156px; }
.swap { margin: 0 32px 0 12px; }
.options .field + .sep { margin-left: -3px; }
.mask-btn {
  margin-left: 20px;
  width: 218px;
  height: 48px;
  color: #e6e6e6;
  background: #262626;
  border: 2px solid #444;
  border-radius: 6px;
}
.more { margin-left: auto; margin-right: 9px; }

/* Workspace */
.workspace { flex: 1; min-height: 0; display: flex; position: relative; background: #222; gap: 6px; }
.head { height: 24px; flex: none; background: #272727; border-bottom: 2px solid #202020; display: flex; align-items: center; padding: 0 10px; }
.head.end { justify-content: flex-end; }
.grip { width: 38px; height: 8px; margin: 6px auto 19px; background: repeating-linear-gradient(90deg, #262626 0 2px, transparent 2px 4px); }

/* Tools */
.tools { width: 144px; flex: none; background: #323232; border-left: 2px solid #262626; }
.tool-grid { display: grid; grid-template-columns: 64px 64px; gap: 2px 3px; padding-left: 3px; }
.tool { height: 50px; border: 2px solid transparent; border-radius: 6px; position: relative; }
.tool.active { background: #1f1f1f; border-color: #3c3c3c; }
.tool::after {
  content: "";
  position: absolute;
  right: 5px;
  bottom: 6px;
  border: 3px solid transparent;
  border-right-color: #c4c4c4;
  border-bottom-color: #c4c4c4;
}
.tool.single::after { display: none; }
.tool.gen svg { margin-left: 6px; }
.colors { height: 106px; margin: 12px 0 0 29px; position: relative; }
.swatch { position: absolute; width: 52px; height: 51px; border: 2px solid #111; }
.fore { left: 3px; top: 4px; background: #000; outline: 2px solid #fff; outline-offset: -4px; }
.back { left: 33px; top: 37px; background: #fff; }
.swap-colors { position: absolute; left: 70px; top: 4px; width: 22px; height: 22px; }
.mini { position: absolute; left: 0; top: 68px; width: 24px; height: 24px; }

/* Document */
.document { flex: 1; min-width: 0; display: flex; flex-direction: column; background: #282828; }
.doc-tabs { height: 58px; flex: none; display: flex; border-bottom: 2px solid #202020; background: #262626; }
.doc-tab {
  display: flex;
  align-items: center;
  gap: 20px;
  padding: 0 19px 0 14px;
  background: #323232;
  border-right: 2px solid #202020;
  font-family: "Noto Sans", "Open Sans", sans-serif;
  font-size: 23px;
  font-weight: 700;
  color: #e8e8e8;
  white-space: pre;
}
.close { font-size: 26px; font-weight: 400; color: #999; }
.doc-body { flex: 1; min-height: 0; display: grid; grid-template-columns: 38px 1fr 32px; grid-template-rows: 38px 1fr; }
.corner {
  background:
    linear-gradient(90deg, transparent 26px, #555 26px 27px, transparent 27px),
    linear-gradient(transparent 26px, #555 26px 27px, transparent 27px), #2a2a2a;
}
.ruler-h, .ruler-v {
  position: relative;
  display: flex;
  overflow: hidden;
  background: #2a2a2a;
  color: #989898;
  font-family: "Noto Sans", "Open Sans", sans-serif;
  font-size: 21px;
}
.ruler-v { flex-direction: column; }
.cell { flex: none; }
.ruler-h .cell {
  width: 100px;
  padding-left: 3px;
  line-height: 42px;
  border-left: 1px solid #6e6e6e;
  background:
    repeating-linear-gradient(90deg, transparent 0 9px, #666 9px 10px) 0 100% / 100% 4px no-repeat,
    linear-gradient(90deg, transparent 49px, #6e6e6e 49px 50px, transparent 50px) 0 100% / 100% 8px no-repeat;
}
.ruler-h .cell:nth-of-type(1) { margin-left: -46px; }
.ruler-v .cell {
  height: 100px;
  padding: 2px 0 0 13px;
  line-height: 19px;
  border-top: 1px solid #6e6e6e;
  background:
    repeating-linear-gradient(transparent 0 9px, #666 9px 10px) 100% 0 / 4px 100% no-repeat,
    linear-gradient(transparent 49px, #6e6e6e 49px 50px, transparent 50px) 100% 0 / 8px 100% no-repeat;
}
.ruler-v .cell:nth-of-type(1) { margin-top: -64px; }
.pos { position: absolute; background: #fff; }
.ruler-h .pos { left: 1332px; top: 3px; width: 2px; height: 22px; }
.ruler-v .pos { left: 3px; top: 727px; width: 22px; height: 2px; }
.canvas { position: relative; overflow: hidden; background: #191919; }
.artboard {
  position: absolute;
  left: 354px;
  top: 236px;
  width: 1500px;
  height: 1500px;
  box-shadow: 0 4px 16px rgba(0, 0, 0, 0.3);
  background:
    linear-gradient(90deg, #000 6px, rgba(0, 0, 0, 0.78) 14px, rgba(0, 0, 0, 0.45) 26px, rgba(0, 0, 0, 0.18) 40px, transparent 58px),
    linear-gradient(#000 6px, rgba(0, 0, 0, 0.78) 12px, rgba(0, 0, 0, 0.42) 20px, rgba(0, 0, 0, 0.15) 32px, transparent 46px),
    #fff;
}
.taskbar {
  position: absolute;
  left: 892px;
  bottom: 36px;
  height: 72px;
  display: flex;
  align-items: center;
  gap: 9px;
  padding: 0 24px 0 8px;
  background: #323232;
  border: 1px solid #0c0c0c;
  border-radius: 8px;
  box-shadow: 0 6px 18px rgba(0, 0, 0, 0.4);
  font-size: 24px;
  color: #e4e4e4;
}
.dots { width: 10px; height: 52px; margin-right: 7px; background: repeating-linear-gradient(#d6d6d6 0 4px, transparent 4px 8px); }
.task { height: 56px; padding: 0 21px; gap: 8px; border: 2px solid #686868; border-radius: 6px; }
.task + .task { padding: 0 18px; }
.plain { margin-left: 20px; margin-right: 19px; }
.plain:last-child { margin-right: 0; }
.vscroll, .filler { background: #282828; }
.status { height: 32px; flex: none; display: flex; align-items: center; background: #282828; }
.zoom { width: 120px; padding-left: 34px; font-size: 24px; color: #e4e4e4; }
.doc-size { width: 366px; height: 30px; padding: 0 6px 0 83px; display: flex; align-items: center; justify-content: space-between; background: #323232; color: #b0b0b0; }
.hscroll { flex: 1; height: 20px; padding: 0 600px 0 666px; }
.hscroll .thumb { height: 20px; border-radius: 10px; background: #484848; }

/* Dock */
.dock { width: 244px; flex: none; background: #323232; }
.group {
  display: flex;
  flex-direction: column;
  gap: 10px;
  padding: 22px 8px 12px;
  border-bottom: 2px solid #222;
  background: repeating-linear-gradient(90deg, #262626 0 2px, transparent 2px 4px) 102px 6px / 38px 8px no-repeat;
}
.group button {
  height: 46px;
  justify-content: flex-start;
  gap: 18px;
  padding: 4px 0 0 10px;
  border: 2px solid transparent;
  border-radius: 4px;
  font-family: "Noto Sans", "Open Sans", sans-serif;
  font-size: 22px;
  font-weight: 600;
  color: #e4e4e4;
  white-space: nowrap;
}
.group button.active { background: #1f1f1f; border-color: #3e3e3e; }
.group svg, .glyph { margin-bottom: 4px; }
.group .i40 { margin: 0 -3px 4px; }
.glyph {
  width: 34px;
  text-align: center;
  font-family: Inter, "Liberation Sans", sans-serif;
  font-size: 30px;
  font-weight: 400;
  line-height: 34px;
  color: #d6d6d6;
}
.glyph.fx {
  text-align: left;
  font-family: "Noto Sans", "Open Sans", sans-serif;
  font-style: italic;
  font-size: 26px;
  font-weight: 500;
  background: linear-gradient(#777, #777) 4px 0 / 28px 26px no-repeat;
  text-shadow: 3px 0 #323232, 0 -3px #323232, 2px -2px #323232, -2px -2px #323232, 3px 3px #323232, 0 3px #323232, -3px 3px #323232;
}
.glyph.script { font-family: "Liberation Serif", serif; font-style: italic; font-size: 36px; }
.glyph.para { font-weight: 700; }
.glyph.mixed { position: relative; padding-left: 14px; font-weight: 600; }
.glyph.mixed svg { position: absolute; left: -2px; top: 4px; width: 34px; height: 34px; }

/* Right side panels */
.panels { width: 572px; flex: none; display: flex; flex-direction: column; }
.panel { display: flex; flex-direction: column; background: #323232; }
.history { height: 1044px; margin-bottom: 4px; }
.layers { flex: 1; min-height: 0; }
.tabs { height: 56px; flex: none; display: flex; align-items: center; background: #272727; padding-right: 10px; }
.tab {
  height: 100%;
  padding: 0 18px;
  border-right: 2px solid #212121;
  border-bottom: 2px solid #212121;
  font-family: "Noto Sans", "Open Sans", sans-serif;
  font-size: 21px;
  font-weight: 600;
  color: #949494;
}
.tab.active { background: #323232; border-color: #323232; color: #f0f0f0; }
.tabs .menu { margin-left: auto; }
.scroll-area { flex: 1; min-height: 0; padding-right: 30px; background: #2b2b2b; border-bottom: 2px solid #262626; }
.history .scroll-area { border-top: 10px solid #323232; }
.snapshot {
  display: flex;
  align-items: center;
  gap: 12px;
  height: 80px;
  padding-left: 8px;
  padding-bottom: 6px;
  background: #323232;
  border-bottom: 3px solid #4a4a4a;
  color: #a8a8a8;
}
.snapshot .thumb { width: 64px; height: 65px; border: 3px solid #666; margin-right: -5px; }
.checker { background: repeating-conic-gradient(#ccc 0 25%, #fff 0 50%) 0 0 / 8px 8px; }
.states li {
  height: 46px;
  display: flex;
  align-items: center;
  padding: 0 0 2px 11px;
  border-bottom: 1px solid #292929;
  background: #323232;
  color: #a8a8a8;
}
.states li.active { background: #4b4b4b; color: #ececec; }
.states input { appearance: none; width: 24px; height: 24px; border: 2px solid #292929; border-radius: 3px; margin-right: 29px; }
.states .active input { border-color: #404040; }
.doc { width: 28px; height: 30px; margin-right: 22px; }
.gradient { width: 32px; height: 26px; margin: 0 20px 0 -2px; border: 2px solid #d6d6d6; background: linear-gradient(90deg, #3a3a3a, #d6d6d6); }
.foot { height: 48px; flex: none; display: flex; align-items: center; justify-content: flex-end; gap: 28px; padding-right: 54px; background: #323232; }
.foot button { width: 26px; position: relative; }
.hist-foot { gap: 35px; padding-right: 55px; }
.foot .fx { font-family: "Noto Sans", "Open Sans", sans-serif; font-style: italic; font-size: 26px; color: #d6d6d6; }
.drop::after { content: ""; position: absolute; right: -8px; bottom: 0; border: 4px solid transparent; border-top-color: #fff; border-bottom: 0; }

/* Layers */
.filter-row, .blend-row, .lock-row { display: flex; align-items: center; padding-left: 6px; border-bottom: 2px solid #292929; flex: none; }
.filter-row { height: 63px; padding-top: 10px; }
.blend-row { height: 57px; }
.lock-row { height: 60px; padding-left: 10px; }
.kind { position: relative; margin-right: 22px; }
.kind svg { position: absolute; left: 18px; top: 9px; }
.kind select { width: 178px; padding-left: 44px; }
.filter-row button { width: 26px; margin-right: 22px; }
.toggle { appearance: none; width: 20px; height: 37px; border: 2px solid #4a4a4a; border-radius: 10px; background: radial-gradient(circle at 50% 8px, #d6d6d6 8px, #262626 9px); }
.blend { width: 262px; margin-right: 8px; }
.blend-row label, .lock-row label, .lock-row span { color: #b0b0b0; }
.combo { display: flex; width: 104px; height: 36px; border: 2px solid #484848; border-radius: 6px; background: #262626; color: #e6e6e6; }
.combo input { width: 73px; padding-left: 6px; border-right: 2px solid #484848; }
.combo button { flex: 1; }
.lock-row button { width: 28px; margin-right: 16px; }
.lock-row .combo button { width: auto; margin: 0; }
.lock-row span { margin-right: 8px; }
.lock-row label { margin: 0 3px 0 31px; }
.layer { height: 178px; display: flex; background: #323232; border-bottom: 2px solid #292929; }
.eye { width: 61px; border-right: 2px solid #292929; }
.name { flex: 1; display: flex; align-items: center; gap: 11px; padding-left: 2px; }
.layer.active .name { background: #4b4b4b; }
.frame { padding: 2px; border: 3px solid transparent; }
.layer.active .frame { border-color: #fff; }
.frame .thumb { display: block; width: 160px; height: 160px; border: 2px solid #6c6c6c; background-color: #fff; }
.shade { box-shadow: inset 5px 5px 4px -2px rgba(0, 0, 0, 0.5); }

/* Actions panel */
.actions {
  position: absolute;
  right: 825px;
  top: 242px;
  bottom: 332px;
  width: 584px;
  display: flex;
  flex-direction: column;
  background: #323232;
  border: 2px solid #202020;
  box-shadow: 0 6px 18px rgba(0, 0, 0, 0.45);
}
.actions .dbl { margin-left: auto; }
.bar { width: 2px; height: 24px; margin: 0 14px; background: #8a8a8a; }
.actions .tabs { height: 58px; }
.actions .tabs .menu { margin-left: 0; }
.act-body { flex: 1; min-height: 0; display: flex; border-top: 7px solid #323232; }
.act-list {
  flex: 1;
  min-width: 0;
  display: flex;
  flex-direction: column;
  position: relative;
  background: linear-gradient(90deg, transparent 42px, #292929 42px 44px, transparent 44px);
}
.row { height: 40px; display: grid; grid-template-columns: 44px 44px 32px minmax(0, 1fr); align-items: center; }
.tg, .dg, .chev { display: flex; justify-content: center; align-items: center; }
.tg input { appearance: none; width: 24px; height: 22px; border: 2px solid #292929; border-radius: 3px; }
.tg input:checked {
  border: 0;
  height: 20px;
  background: url("data:image/svg+xml,%3Csvg xmlns='http://www.w3.org/2000/svg' viewBox='0 0 20 16'%3E%3Cpath d='M2 8l5 5L18 2' fill='none' stroke='%23d6d6d6' stroke-width='4'/%3E%3C/svg%3E") no-repeat center / 20px 16px;
}
.box { width: 26px; height: 24px; border: 2px solid #292929; border-radius: 3px; }
.label { height: 40px; display: flex; align-items: center; white-space: nowrap; border-bottom: 2px solid #292929; }
.set .label svg { width: 28px; height: 24px; margin: 0 17px 0 8px; }
.action { grid-template-columns: 44px 44px 32px 32px minmax(0, 1fr); }
.action .chev { grid-column: 4; }
.action .label { padding-left: 7px; height: 38px; background: #4b4b4b; }
.step { grid-template-columns: 44px 44px 64px 32px minmax(0, 1fr); }
.step .chev { grid-column: 4; }
.step .label { grid-column: 5; padding-left: 12px; }
.row.step:last-child .label { border: 0; }
.props { flex: 1; display: grid; grid-auto-rows: 1fr; align-items: center; padding-left: 196px; white-space: pre; }
.act-scroll { width: 33px; padding: 313px 7px 4px; background: #292929; display: flex; }
.act-scroll .thumb { flex: 1; border-radius: 10px; background: #484848; }
.act-foot { height: 46px; border-top: 2px solid #262626; gap: 33px; padding-right: 56px; }
.rec { width: 18px; height: 18px; border-radius: 50%; background: #d6d6d6; }
.resize { height: 16px; border-top: 4px solid #222; background: repeating-linear-gradient(90deg, #222 0 2px, transparent 2px 4px) 50% 0 / 38px 10px no-repeat; }

/* Notification */
.notice {
  position: absolute;
  right: 31px;
  top: 32px;
  width: 686px;
  height: 114px;
  display: flex;
  align-items: center;
  gap: 27px;
  padding-left: 22px;
  border: 2px solid #505152;
  border-radius: 34px;
  background: radial-gradient(ellipse 130px 220px at 375px 40px, #263b50, #2e2f31 100%);
  box-shadow: 0 4px 24px rgba(0, 0, 0, 0.4);
  font-size: 26px;
  font-weight: 500;
  line-height: 32px;
  color: #f0f0f0;
}
.notice strong { font-weight: 600; }
.clock { width: 64px; height: 64px; }
.nums { fill: #222; font-size: 8px; font-weight: 600; text-anchor: middle; }
```
